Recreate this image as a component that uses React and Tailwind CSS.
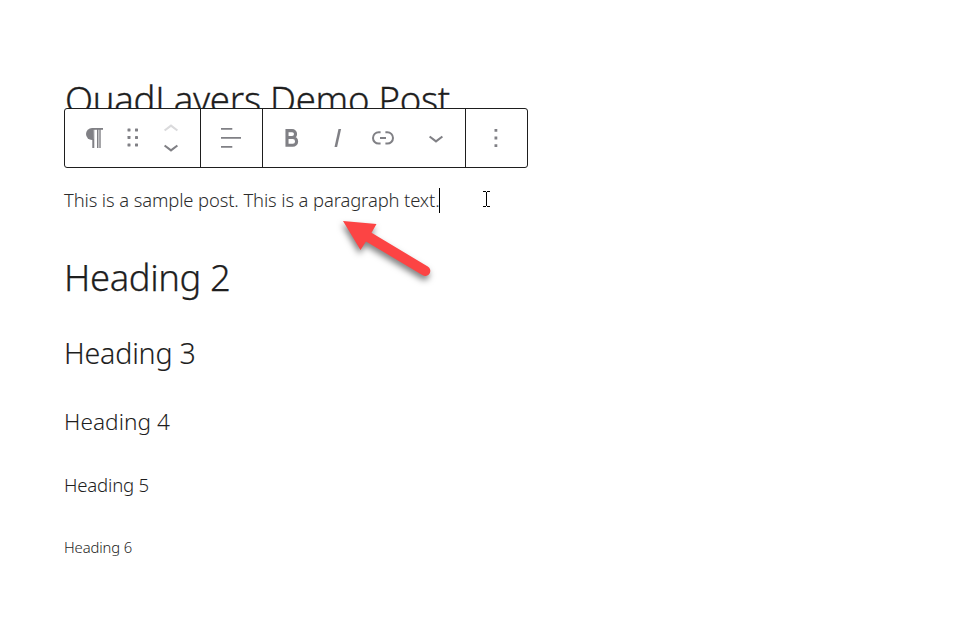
function ParagraphIcon() {
  return (
    <svg width="18" height="20" viewBox="0 0 18 20" fill="#808085">
      <path d="M6.5 0H17v1.8H6.5z" />
      <path d="M7.5 0v12H6A6 6 0 0 1 6 0z" />
      <path d="M6.3 11h1.5v9H6.3zM7.5 0h.8v20h-1.3zM11 1h1.5v19H11zM13.3 1h1.4v19h-1.4z" />
    </svg>
  )
}

function DragIcon() {
  return (
    <svg width="12" height="20" viewBox="0 0 12 20" fill="#808085">
      {[1, 8.5, 16].map((y) => (
        <g key={y}>
          <rect x="0.5" y={y - 0.5} width="3" height="3" rx="0.4" />
          <rect x="8" y={y - 0.5} width="3" height="3" rx="0.4" />
        </g>
      ))}
    </svg>
  )
}

function Chevron({ up = false, color = '#808085' }) {
  return (
    <svg width="16" height="8" viewBox="0 0 16 8" fill="none" stroke={color} strokeWidth="2.1">
      <path d={up ? 'M1.6 6.5 8 1.6l6.4 4.9' : 'M1.6 1.5 8 6.4l6.4-4.9'} />
    </svg>
  )
}

function AlignIcon() {
  return (
    <svg width="20" height="20" viewBox="0 0 20 20" fill="#808085">
      <path d="M0 0h11.3v1.7H0zM0 9h20v1.7H0zM0 18h11.3v1.7H0z" />
    </svg>
  )
}

function BoldIcon() {
  return (
    <svg width="14" height="18" viewBox="0 0 14 18" fill="none" stroke="#808085" strokeWidth="3.1">
      <path d="M2 1.6h5.1a3.4 3.4 0 0 1 0 6.9H2M2 8.5h5.7a3.9 3.9 0 0 1 0 7.8H2M2 0v17.8" />
    </svg>
  )
}

function ItalicIcon() {
  return (
    <svg width="8" height="18" viewBox="0 0 8 18" fill="#808085">
      <path d="M4.5 0h2.6L3.1 18H.5z" />
    </svg>
  )
}

function LinkIcon() {
  return (
    <svg width="22" height="14" viewBox="0 0 22 14" fill="none" stroke="#808085" strokeWidth="2">
      <path d="M8.6 1.2H6.7a5.7 5.7 0 0 0 0 11.4h1.9M13.4 1.2h1.9a5.7 5.7 0 0 1 0 11.4h-1.9M8 6.9h6" />
    </svg>
  )
}

function MoreIcon() {
  return (
    <svg width="4" height="18" viewBox="0 0 4 18" fill="#808085">
      <path d="M.5 0h2.8v2.8H.5zM.5 7.6h2.8v2.8H.5zM.5 15.2H3.3V18H.5z" />
    </svg>
  )
}

function Toolbar() {
  return (
    <div className="relative flex h-[60px] w-[464px] rounded-[3px] border border-[#1e1e1e] bg-white">
      <div className="flex w-[136px] items-center border-r border-[#1e1e1e] pl-[21px]">
        <ParagraphIcon />
        <div className="ml-[23px]"><DragIcon /></div>
        <div className="ml-[24px] flex flex-col gap-[12px]">
          <Chevron up color="#dadadc" />
          <Chevron />
        </div>
      </div>
      <div className="flex w-[62px] items-center border-r border-[#1e1e1e] pl-5">
        <AlignIcon />
      </div>
      <div className="flex w-[203px] items-center border-r border-[#1e1e1e] pl-[22px]">
        <BoldIcon />
        <div className="ml-[35px]"><ItalicIcon /></div>
        <div className="ml-[30px]"><LinkIcon /></div>
        <div className="ml-[34px] mt-0.5"><Chevron /></div>
      </div>
      <div className="flex flex-1 items-center pl-[28px]">
        <MoreIcon />
      </div>
    </div>
  )
}

function App() {
  return (
    <div className="relative flex h-[633px] w-[980px] flex-col overflow-hidden bg-white pl-16 font-['Noto_Sans',sans-serif] font-light text-[#1e1e1e]">
      <h1 className="mt-[74px] h-[34px] pl-px text-[36.5px] leading-[51px] tracking-[-0.26px] whitespace-nowrap [-webkit-text-stroke:0.3px_#1e1e1e]">QuadLayers Demo Post</h1>
      <Toolbar />
      <p className="mt-5 flex h-6 items-center text-[18.4px] leading-6 tracking-[-0.11px] whitespace-nowrap text-[#2c2c2c]">
        <span>This is a sample post. This is a paragraph text.</span>
        <span className="-ml-px h-[25px] w-px bg-black" />
      </p>
      <h2 className="mt-[41px] h-12 text-[36.4px] leading-[48px] tracking-[-0.4px] whitespace-nowrap [-webkit-text-stroke:0.25px_#1e1e1e]">Heading 2</h2>
      <h3 className="mt-[34px] h-9 text-[28.6px] leading-9 tracking-[-0.2px] whitespace-nowrap [-webkit-text-stroke:0.1px_#1e1e1e]">Heading 3</h3>
      <h4 className="mt-[35px] h-8 text-[22.6px] leading-8 tracking-[0.05px] whitespace-nowrap">Heading 4</h4>
      <h5 className="mt-[35px] h-6 text-[18.6px] leading-6 tracking-[-0.2px] whitespace-nowrap">Heading 5</h5>
      <h6 className="mt-[40px] h-5 text-[14.8px] leading-5 tracking-[-0.1px] whitespace-nowrap">Heading 6</h6>

      <svg className="absolute top-[190px] left-[482px]" width="9" height="18" viewBox="0 0 9 18" fill="none" stroke="#000" shapeRendering="crispEdges">
        <path d="M1 1.5h3M5 1.5h3M4.5 2v14M1 16.5h3M5 16.5h3" />
      </svg>
      <svg className="absolute top-[210px] left-[330px] drop-shadow-[-1px_4px_3px_rgba(0,0,0,0.5)]" width="120" height="80" viewBox="0 0 120 80">
        <path d="M13 11 46.5 14 41.5 22.8 97.8 56.5A5 5 0 0 1 92.7 65.2L36 31.4 30.5 40z" fill="#fc4444" />
      </svg>
    </div>
  )
}

export default App
